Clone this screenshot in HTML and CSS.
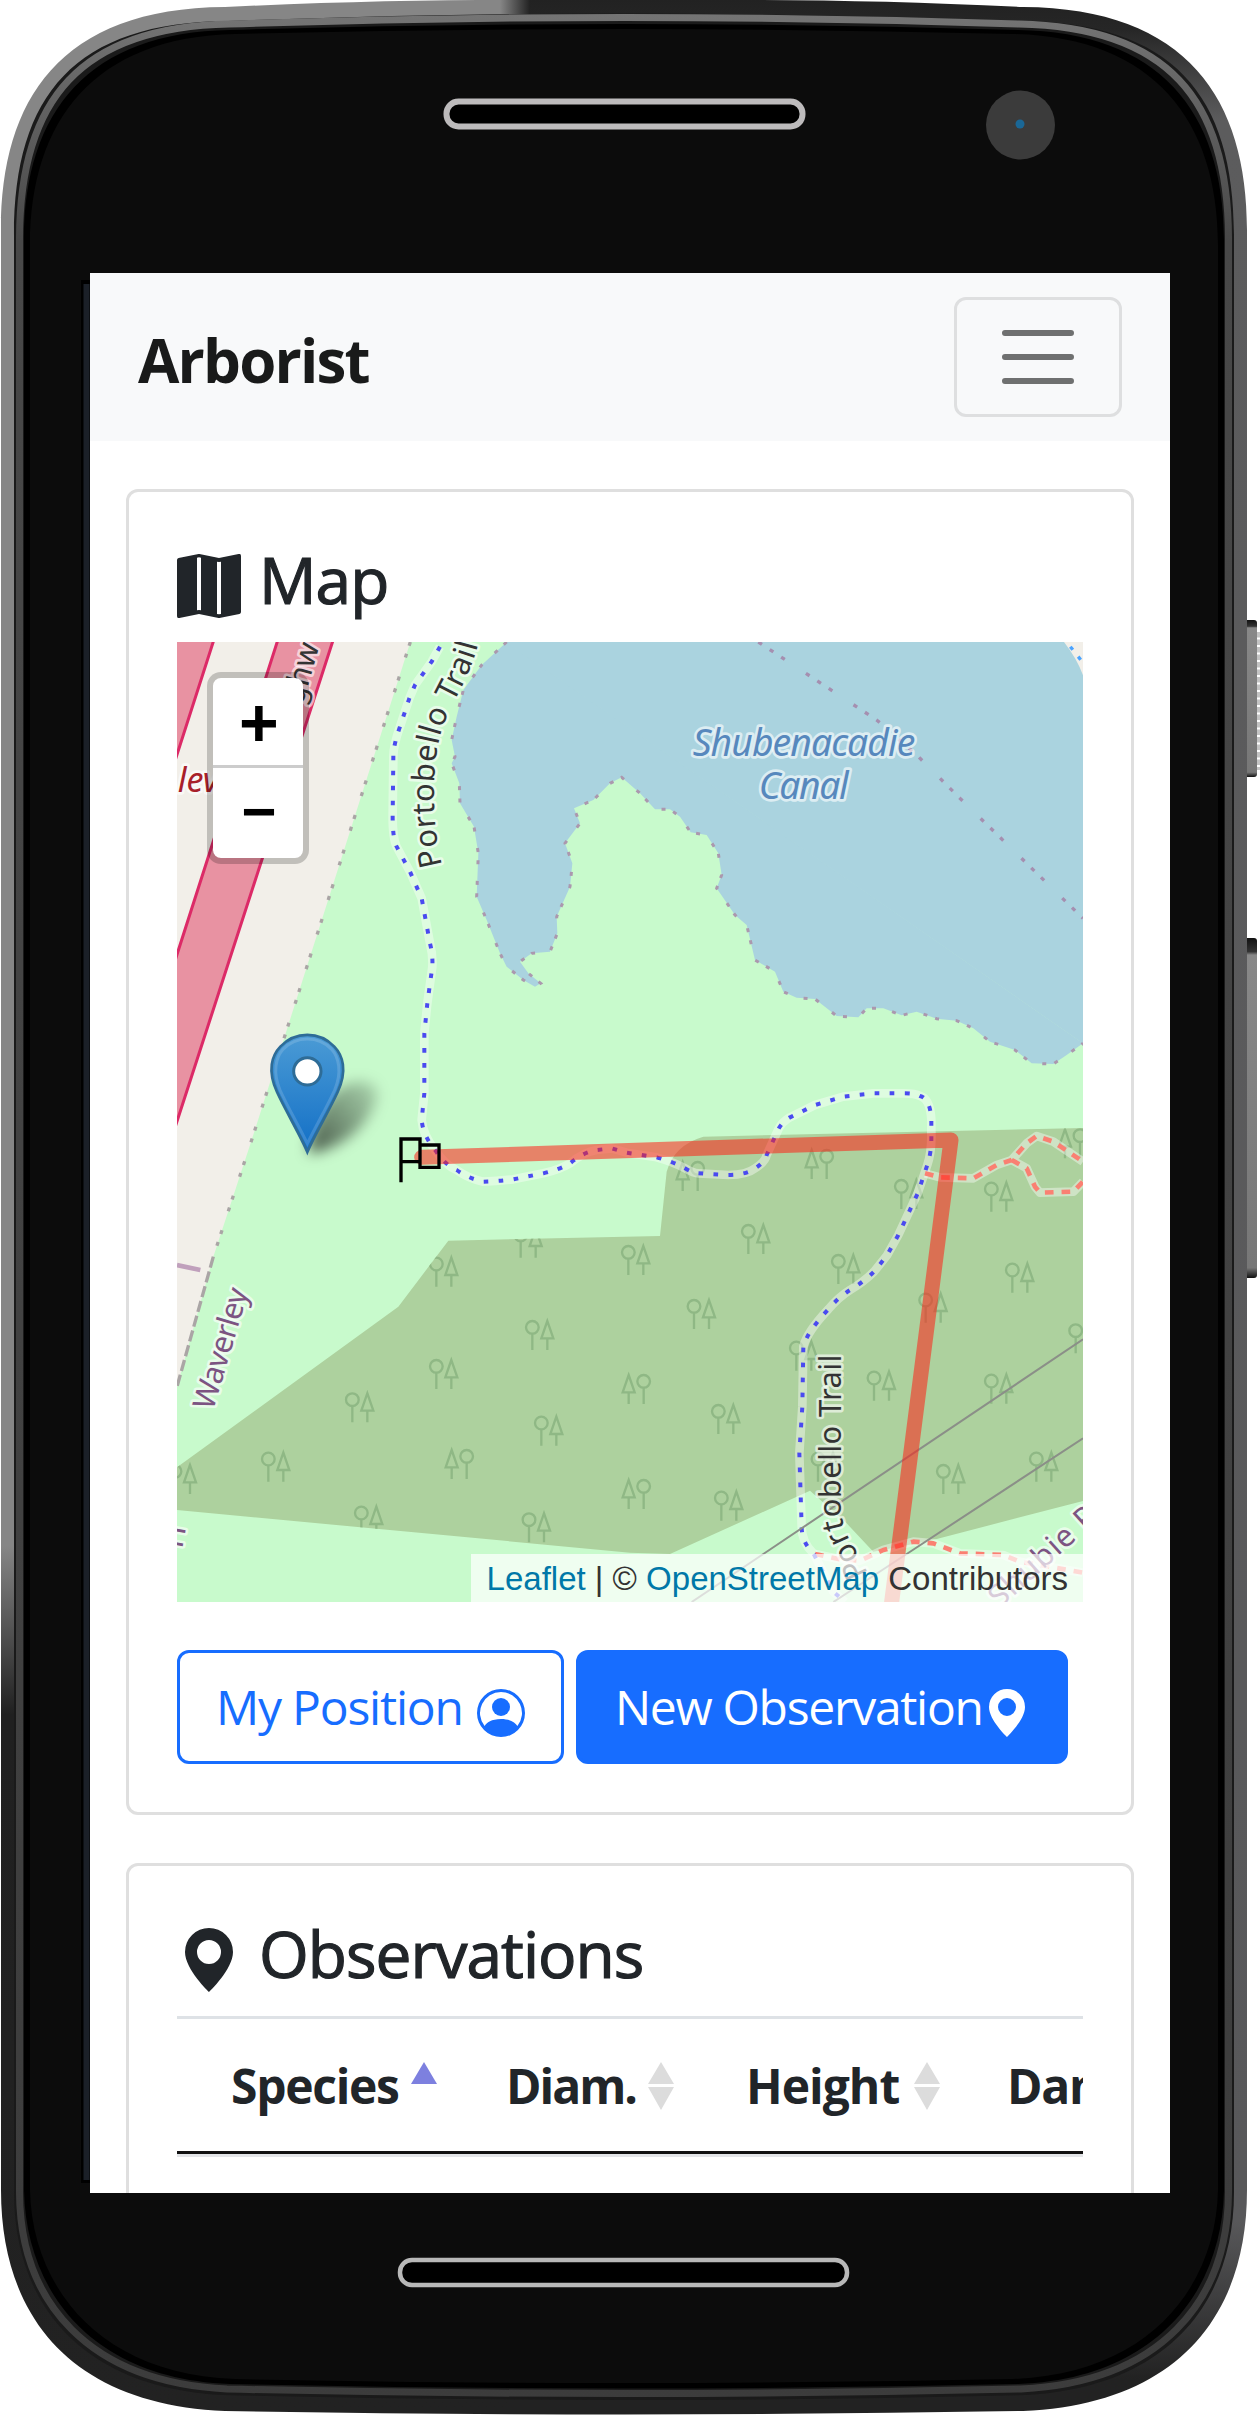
FILE: index.html
```html
<!DOCTYPE html>
<html lang="en">
<head>
<meta charset="utf-8">
<title>Arborist</title>
<link rel="stylesheet" href="styles.css">
</head>
<body>
<div class="phone">
  <svg class="phone-case" viewBox="0 0 1260 2415" aria-hidden="true">
    <defs>
      <linearGradient id="rimRight" x1="0" x2="0" y1="0" y2="2415" gradientUnits="userSpaceOnUse">
        <stop offset="0" stop-color="#222"/><stop offset=".012" stop-color="#262626"/><stop offset=".05" stop-color="#5c5c5d"/><stop offset=".92" stop-color="#58585a"/><stop offset=".985" stop-color="#222"/>
      </linearGradient>
      <linearGradient id="rimLeft" x1="0" x2="0" y1="0" y2="2415" gradientUnits="userSpaceOnUse">
        <stop offset="0" stop-color="#868686"/><stop offset=".64" stop-color="#868686"/><stop offset=".71" stop-color="#202020"/><stop offset="1" stop-color="#222"/>
      </linearGradient>
      <linearGradient id="ring" x1="0" x2="0" y1="0" y2="2415" gradientUnits="userSpaceOnUse">
        <stop offset="0" stop-color="#777"/><stop offset=".1" stop-color="#484848"/><stop offset="1" stop-color="#3c3c3c"/>
      </linearGradient>
      <linearGradient id="key" x1="0" x2="0" y1="0" y2="1">
        <stop offset="0" stop-color="#111"/><stop offset=".04" stop-color="#333"/><stop offset=".05" stop-color="#888"/><stop offset=".97" stop-color="#777"/><stop offset="1" stop-color="#111"/>
      </linearGradient>
      <linearGradient id="seam" x1="500" x2="530" y1="0" y2="0" gradientUnits="userSpaceOnUse"><stop offset="0" stop-color="#868686"/><stop offset="1" stop-color="#222"/></linearGradient>
      <path id="case" d="M1 230C1 100 60 8 225 7C330 2 420 0 514 0H734C828 0 918 2 1023 7C1188 8 1247 100 1247 230V2190C1247 2320 1173 2405 1023 2411Q624 2418 225 2411C75 2405 1 2320 1 2190Z"/>
      <clipPath id="leftHalf"><path d="M0 0H510V2415H0Z"/></clipPath>
      <clipPath id="rightHalf"><path d="M510 0H1260V2415H510Z"/></clipPath>
      <clipPath id="seamClip"><path d="M500 0H530V30H500Z"/></clipPath>
    </defs>
    <rect x="1244" y="620" width="13" height="157" rx="3" fill="url(#key)"/>
    <path d="M1258.500 632V770" stroke="#c4c4c4" stroke-width="3" stroke-dasharray="5.500 2"/>
    <rect x="1244" y="938" width="13" height="340" rx="3" fill="url(#key)"/>
    <use href="#case" fill="url(#rimLeft)" clip-path="url(#leftHalf)"/>
    <use href="#case" fill="url(#rimRight)" clip-path="url(#rightHalf)"/>
    <use href="#case" fill="url(#seam)" clip-path="url(#seamClip)"/>
    <path d="M14 235C14 95 75 22 228 21Q624 6 1020 21C1173 22 1234 95 1234 235V2192C1234 2305 1165 2388 1025 2395Q624 2405 223 2395C83 2388 14 2305 14 2192Z" fill="#1a1a1a"/>
    <path d="M19.500 238C20 100 80 27 229 24Q624 11 1019 24C1168 27 1228 100 1228.500 238V2192C1228 2302 1160 2382 1021 2389Q624 2398 227 2389C88 2382 20 2302 19.500 2192Z" fill="none" stroke="url(#ring)" stroke-width="7"/>
    <path d="M24 240C24 110 90 32 230 30Q624 18 1018 30C1158 32 1224 110 1224 240V2190C1222 2292 1156 2379 1018 2384Q624 2393 230 2384C92 2379 26 2292 24 2190Z" fill="#000"/>
    <path d="M30 245C30 120 95 37 235 34Q624 24 1013 34C1153 37 1218 120 1218 245V2190C1216 2286 1150 2374 1013 2379Q624 2387 235 2379C98 2374 32 2286 30 2190Z" fill="#0c0c0c"/>
    <path d="M81 280V2183H90V280Z" fill="#000"/>
    <path d="M86.500 284V2180" stroke="#1b2028" stroke-width="6"/>
    <rect x="446.500" y="101.500" width="356" height="25" rx="12" fill="#000" stroke="#bdbbbc" stroke-width="6"/>
    <rect x="400" y="2260" width="447" height="25" rx="12" fill="#000" stroke="#b8b8b8" stroke-width="4.500"/>
    <circle cx="1020.500" cy="125" r="34.500" fill="#3b3b3b"/>
    <circle cx="1020" cy="124" r="4.500" fill="#1a6796"/>
  </svg>

  <main class="screen">
    <nav class="navbar">
      <a class="brand">Arborist</a>
      <button class="toggler" aria-label="Menu">
        <svg viewBox="0 0 30 30"><path d="M4 7h22M4 15h22M4 23h22" stroke="#6f7070" stroke-width="2" stroke-linecap="round"/></svg>
      </button>
    </nav>

    <div class="content">
      <section class="card">
        <h4 class="title">
          <svg class="icon" viewBox="0 0 16 16"><path fill-rule="evenodd" d="M16 .5a.5.500 0 0 0-.598-.49L10.500.99 5.598.01a.5.500 0 0 0-.196 0l-5 1A.5.500 0 0 0 0 1.500v14a.5.500 0 0 0 .598.490l4.902-.980 4.902.980a.5.500 0 0 0 .196 0l5-1A.5.500 0 0 0 16 14.500V.5zM5 14.090V.910l.5-.100.500.100v13.180l-.500-.100-.500.100zm5 .900V1.910l.500.100.500-.100v13.080l-.500.100-.500-.100z"/></svg>
          <span class="title-map">Map</span>
        </h4>

        <div class="map">
          <svg class="tiles" viewBox="0 0 2718 2880">
            <defs>
              <g id="tree" fill="none" stroke="#8fb885" stroke-width="7">
                <circle cx="-23" cy="-23" r="19"/><path d="M-23-4V45M22-42L4 10H40ZM22 10V45"/>
              </g>
              <clipPath id="woods"><path d="M0 2476L664 1994L814 1796L1449 1782L1469 1589Q1490 1510 1579 1484L2718 1458V2577L2259 2696L2089 2729L2009 2644L1899 2546L1479 2736L1359 2732L0 2604Z"/></clipPath>
              <path id="trail" d="M789 14L764 59L714 129L697 169L669 254Q649 310 649 344L647 524Q647 590 659 614L699 689L734 769L759 904Q768 940 766 974L751 1084L742 1174V1354L734 1434Q738 1480 774 1524Q805 1570 839 1584Q875 1610 919 1619Q960 1618 1009 1612L1099 1594Q1150 1582 1179 1564Q1220 1530 1259 1524L1304 1519L1349 1532L1439 1546Q1490 1560 1524 1579Q1550 1594 1564 1594L1654 1599Q1710 1598 1734 1579Q1765 1560 1769 1539L1804 1462Q1815 1440 1839 1426L1914 1389L1999 1364L2089 1354H2179Q2215 1354 2229 1362Q2260 1370 2263 1434V1479Q2264 1530 2251 1569L2222 1654L2164 1779L2130 1840L2091 1889Q2060 1920 2019 1944Q1985 1965 1954 2002Q1890 2070 1879 2114L1876 2294L1867 2434L1874 2654Q1874 2700 1909 2734L1969 2849L2004 2880"/>
              <path id="shore" d="M989 0L914 69L859 144L839 224L824 294L834 344L824 364L847 424L849 484L891 554L904 634L899 764L929 834L969 934L989 974L1039 1014L1074 1034L1091 1024L1054 994L1029 959L1064 934L1119 929L1141 874L1139 824L1179 734L1186 664L1164 604L1209 544L1191 499L1249 474L1299 424L1334 406L1389 454L1434 502L1479 502L1509 524L1541 571L1589 579L1624 634L1634 699L1619 739L1674 819L1709 849L1734 954L1794 989L1819 1049L1859 1067L1914 1071L1979 1122L2044 1126L2069 1099H2119L2174 1120L2219 1109L2279 1130L2339 1136L2389 1159L2439 1199L2514 1224L2564 1264L2629 1266L2669 1239L2718 1204"/>
              <path id="redTrail" d="M2244 1594L2289 1606L2389 1609L2459 1569L2504 1554L2549 1504L2579 1482L2629 1499L2718 1559M2504 1554L2549 1579L2574 1634L2589 1652L2689 1649L2718 1619M1914 2736L1989 2752L2049 2756L2119 2724L2209 2699L2269 2704L2349 2734L2479 2739L2529 2759L2718 2792"/>
              <path id="trailLabel1" d="M796 670C770 580 760 410 786 294C814 174 894 110 916 -60"/>
              <path id="trailLabel2" d="M2072 2796C2045 2720 1996 2690 1993 2600V2050"/>
              <linearGradient id="pin" x1="0" y1="0" x2="0" y2="1"><stop offset="0" stop-color="#4b9bd5"/><stop offset="1" stop-color="#126fc6"/></linearGradient>
              <linearGradient id="shade" x1="400" y1="1500" x2="620" y2="1310" gradientUnits="userSpaceOnUse"><stop offset="0" stop-color="#000" stop-opacity=".6"/><stop offset="1" stop-color="#000" stop-opacity=".1"/></linearGradient>
              <filter id="soft" x="-50%" y="-50%" width="200%" height="200%"><feGaussianBlur stdDeviation="20"/></filter>
            </defs>
            <path fill="#f2efe9" d="M0 0H2718V2880H0Z"/>
            <path fill="#c8facc" d="M700 0H2718V2880H0V2234L109 1844L224 1494Z"/>
            <g fill="#e892a2" stroke="#dc2a67" stroke-width="9">
              <path d="M-20-20H115L-20 400Z"/><path d="M307-20H473L-20 1500V1000Z"/>
            </g>
            <path d="M700 0L224 1494L109 1844" fill="none" stroke="#aaa5a5" stroke-width="10" stroke-dasharray="12 25 12 60"/>
            <path d="M109 1844L0 2234" fill="none" stroke="#aaa5a5" stroke-width="10" stroke-dasharray="34 12"/>
            <path d="M0 1869L70 1884" stroke="#c0a0bc" stroke-width="14"/>
            <use href="#shore" fill="#aad3df"/>
            <path fill="#aad3df" d="M985 0H2720V1206Z"/>
            <path fill="#f2efe9" d="M2661 0H2718V100Q2700 50 2661 0Z"/>
            <path d="M2680 14L2718 62" stroke="#4aa3ff" stroke-width="10" stroke-dasharray="12 26" fill="none"/>
            <use href="#shore" fill="none" stroke="#ab98ae" stroke-width="9" stroke-dasharray="12 25 12 50"/>
            <path d="M1744 0L2099 234L2224 344L2349 469L2718 829" fill="none" stroke="#a58fb0" stroke-width="10" stroke-dasharray="13 28 13 28 13 76"/>
            <g clip-path="url(#woods)">
              <path fill="#add19e" d="M0 1400H2718V2880H0Z"/>
              <use href="#tree" x="801" y="1889"/><use href="#tree" x="1054" y="1802"/><use href="#tree" x="1089" y="2079"/><use href="#tree" x="801" y="2196"/><use href="#tree" x="549" y="2296"/><use href="#tree" x="297" y="2474"/><use href="#tree" x="1116" y="2366"/><use href="#tree" x="17" y="2511"/><use href="#tree" x="576" y="2636"/><use href="#tree" x="1079" y="2656"/>
              <use href="#tree" x="1377" y="1854"/><use href="#tree" x="1737" y="1791"/><use href="#tree" x="2007" y="1881"/><use href="#tree" x="2196" y="1656"/><use href="#tree" x="2466" y="1664"/><use href="#tree" x="2529" y="1907"/><use href="#tree" x="1574" y="2016"/><use href="#tree" x="2269" y="1997"/><use href="#tree" x="1881" y="2141"/><use href="#tree" x="2114" y="2231"/><use href="#tree" x="2466" y="2240"/><use href="#tree" x="2719" y="2089"/><use href="#tree" x="1647" y="2331"/><use href="#tree" x="1656" y="2591"/><use href="#tree" x="2322" y="2511"/><use href="#tree" x="2601" y="2474"/><use href="#tree" x="1946" y="2474"/>
              <use href="#tree" transform="translate(846 2466) scale(-1 1)"/><use href="#tree" transform="translate(1926 1566) scale(-1 1)"/><use href="#tree" transform="translate(1539 1602) scale(-1 1)"/><use href="#tree" transform="translate(1377 2241) scale(-1 1)"/><use href="#tree" transform="translate(1377 2556) scale(-1 1)"/><use href="#tree" transform="translate(2686 1504) scale(-1 1)"/>
            </g>
            <g fill="none" stroke-linejoin="round">
              <g stroke="#fff" stroke-opacity=".4" stroke-width="26"><use href="#trail"/><use href="#redTrail"/></g>
              <use href="#redTrail" stroke="#fa8072" stroke-width="14" stroke-dasharray="26 24"/>
              <use href="#trail" stroke="#4a4af0" stroke-width="12" stroke-dasharray="14 31"/>
              <path d="M2718 2092L1759 2736L1544 2880M2718 2389L2189 2736L1969 2880" stroke="#8b8f88" stroke-width="6"/>
            </g>
            <g class="map-labels">
              <text class="water" x="1547" y="343" textLength="668">Shubenacadie</text>
              <text class="water" x="1745" y="471" textLength="270">Canal</text>
              <text class="path"><textPath href="#trailLabel1" textLength="690">Portobello Trail</textPath></text>
              <text class="path"><textPath href="#trailLabel2" textLength="676">Portobello Trail</textPath></text>
              <text class="path" transform="translate(376 192) rotate(-74)">ghw</text>
              <text class="exit" x="2" y="449">lev</text>
              <text class="place" transform="translate(108 2308) rotate(-73.500)" textLength="375">Waverley</text>
              <text class="place" transform="translate(2468 2900) rotate(-42)" textLength="400">Shubie P</text>
              <text class="place" transform="translate(16 2720) rotate(-80)">rf</text>
            </g>
            <path d="M734 1546L2322 1494L2144 2880" fill="none" stroke="#ff2016" stroke-opacity=".55" stroke-width="45" stroke-linecap="round" stroke-linejoin="round"/>
            <path d="M672 1621V1491H729V1559H672M729 1509H786V1576H729Z" fill="none" stroke="#000" stroke-width="10"/>
            <path d="M395 1534C400 1440 450 1340 530 1320C610 1310 620 1360 570 1430C530 1490 450 1530 395 1534Z" fill="url(#shade)" filter="url(#soft)"/>
            <path d="M391 1530C370 1480 325 1405 300 1350C270 1285 285 1240 310 1214C355 1167 427 1167 472 1214C497 1240 512 1285 482 1350C457 1405 412 1480 391 1530Z" fill="url(#pin)" stroke="#2e6c97" stroke-width="8"/>
            <path d="M391 1505C370 1460 332 1395 309 1344C286 1290 297 1246 318 1222C358 1181 424 1181 464 1222C485 1246 496 1290 473 1344C450 1395 412 1460 391 1505Z" fill="none" stroke="#fff" stroke-opacity=".15" stroke-width="9"/>
            <circle cx="391" cy="1288" r="41" fill="#fff" stroke="#2e6c97" stroke-width="9"/>
          </svg>
          <div class="zoom">
            <a class="zoom-in">+</a>
            <a class="zoom-out">−</a>
          </div>
          <div class="attribution"><a>Leaflet</a> | © <a>OpenStreetMap</a> Contributors</div>
        </div>

        <div class="actions">
          <button class="btn btn-outline"><span class="label-position">My Position</span>
            <svg class="icon" viewBox="0 0 16 16"><path d="M11 6a3 3 0 1 1-6 0 3 3 0 0 1 6 0z"/><path fill-rule="evenodd" d="M0 8a8 8 0 1 1 16 0A8 8 0 0 1 0 8zm8-7a7 7 0 0 0-5.468 11.370C3.242 11.226 4.805 10 8 10s4.757 1.225 5.468 2.370A7 7 0 0 0 8 1z"/></svg>
          </button>
          <button class="btn btn-primary"><span class="label-new">New Observation</span>
            <svg class="icon" viewBox="0 0 16 16"><path d="M8 16s6-5.686 6-10A6 6 0 0 0 2 6c0 4.314 6 10 6 10zm0-7a3 3 0 1 1 0-6 3 3 0 0 1 0 6z"/></svg>
          </button>
        </div>
      </section>

      <section class="card card-list">
        <h4 class="title">
          <svg class="icon" viewBox="0 0 16 16"><path d="M8 16s6-5.686 6-10A6 6 0 0 0 2 6c0 4.314 6 10 6 10zm0-7a3 3 0 1 1 0-6 3 3 0 0 1 0 6z"/></svg>
          <span class="title-obs">Observations</span>
        </h4>
        <div class="table">
          <div class="th th-species"><span>Species</span><svg class="sort" viewBox="0 0 26 48"><path d="M13 0L26 22H0Z" fill="#7d80df"/></svg></div>
          <div class="th th-diam"><span>Diam.</span><svg class="sort" viewBox="0 0 26 48"><path d="M13 0L26 22H0ZM13 48L26 25H0Z" fill="#dcdcdc"/></svg></div>
          <div class="th th-height"><span>Height</span><svg class="sort" viewBox="0 0 26 48"><path d="M13 0L26 22H0ZM13 48L26 25H0Z" fill="#dcdcdc"/></svg></div>
          <div class="th th-damage"><span>Damage</span></div>
        </div>
      </section>
    </div>
  </main>
</div>
</body>
</html>
```
FILE: styles.css
```css
* { box-sizing: border-box; }

body {
  margin: 0;
  background: #fff;
  color: #212529;
  font: 48px/72px "Open Sans", "Noto Sans", sans-serif;
}

.phone {
  position: relative;
  width: 1260px;
  height: 2415px;
  padding: 273px 90px 222px;
  overflow: hidden;
}

.phone-case {
  position: absolute;
  inset: 0;
  width: 1260px;
  height: 2415px;
}

.screen {
  position: relative;
  height: 1920px;
  overflow: hidden;
  background: #fff;
}

.navbar {
  display: flex;
  align-items: center;
  justify-content: space-between;
  height: 168px;
  padding: 0 48px;
  background: #f8f9fa;
}

.brand {
  color: #191a1a;
  font-size: 60px;
  font-weight: 700;
  line-height: 90px;
  letter-spacing: -1.8px;
  padding-top: 5px;
}

.toggler {
  width: 168px;
  height: 120px;
  padding: 12px 36px;
  border: 3px solid #dedfe0;
  border-radius: 12px;
  background: none;
}

.toggler svg { display: block; width: 90px; height: 90px; }

.content {
  display: flex;
  flex-direction: column;
  gap: 48px;
  padding: 48px 36px 0;
}

.card {
  height: 1326px;
  padding: 48px;
  border: 3px solid #dfdfdf;
  border-radius: 12px;
}

.icon {
  flex: none;
  width: 1em;
  height: 1em;
  fill: currentColor;
}

.title {
  display: flex;
  align-items: center;
  gap: 18px;
  height: 78px;
  margin: 0 0 24px;
  font-size: 64px;
  font-weight: 500;
  line-height: 78px;
}

.title .icon { margin-top: 13px; }

.title-map,
.title-obs {
  padding-top: 2px;
  letter-spacing: -1px;
  -webkit-text-stroke: 1.2px currentColor;
}

.map {
  position: relative;
  height: 960px;
  overflow: hidden;
}

.tiles { display: block; width: 906px; height: 960px; }

.map-labels text {
  font-family: "Noto Sans", sans-serif;
  paint-order: stroke;
  stroke: rgba(255, 255, 255, 0.6);
  stroke-width: 16px;
  stroke-linejoin: round;
}

.map-labels .water { font-size: 112px; font-style: italic; fill: #5788bd; }
.map-labels .path { font-size: 93px; fill: #333; }
.map-labels .exit { font-size: 102px; font-style: italic; fill: #a8202a; }
.map-labels .place { font-size: 92px; fill: #7c5482; }

.zoom {
  position: absolute;
  top: 30px;
  left: 30px;
  width: 102px;
  border: 6px solid rgba(0, 0, 0, 0.2);
  border-radius: 14px;
  background: #fff;
  background-clip: padding-box;
}

.zoom a {
  display: block;
  height: 90px;
  padding-left: 2px;
  color: #000;
  font: bold 68px/100px "Liberation Mono", monospace;
  text-align: center;
}

.zoom .zoom-in { border-bottom: 3px solid #ccc; }
.zoom .zoom-out { font-size: 60px; line-height: 96px; }

.attribution {
  position: absolute;
  right: 0;
  bottom: 0;
  padding: 1px 15px 0 16px;
  background: rgba(255, 255, 255, 0.7);
  color: #333;
  font: 33px/47px "Liberation Sans", Arial, sans-serif;
  white-space: nowrap;
}

.attribution a { color: #0078a8; }

.actions {
  display: flex;
  gap: 12px;
  margin-top: 48px;
}

.btn {
  display: flex;
  align-items: center;
  justify-content: space-between;
  height: 114px;
  padding: 0 36px;
  border: 3px solid #176dff;
  border-radius: 12px;
  font: inherit;
  white-space: nowrap;
}

.btn .icon { margin-top: 12px; }

.btn-outline {
  width: 387px;
  background: none;
  color: #176dff;
}

.btn-primary {
  width: 492px;
  background: #176dff;
  color: #fff;
}

.label-position { letter-spacing: -1.2px; }
.label-new { letter-spacing: -1.3px; }

.card-list { height: 600px; }

.table {
  display: flex;
  height: 141px;
  border-top: 3px solid #dee2e6;
  border-bottom: 3px solid #e3e5e8;
  box-shadow: inset 0 -3px #111;
  overflow: hidden;
}

.th {
  display: flex;
  flex: none;
  align-items: center;
  gap: 12px;
  padding: 0 0 2px 53px;
  font-weight: 700;
  letter-spacing: -1.3px;
}

.th-species { width: 276px; padding-left: 54px; }
.th-diam { width: 240px; letter-spacing: -2px; }
.th-height { width: 261px; letter-spacing: -1px; gap: 15px; }
.sort { width: 26px; height: 48px; }
```
